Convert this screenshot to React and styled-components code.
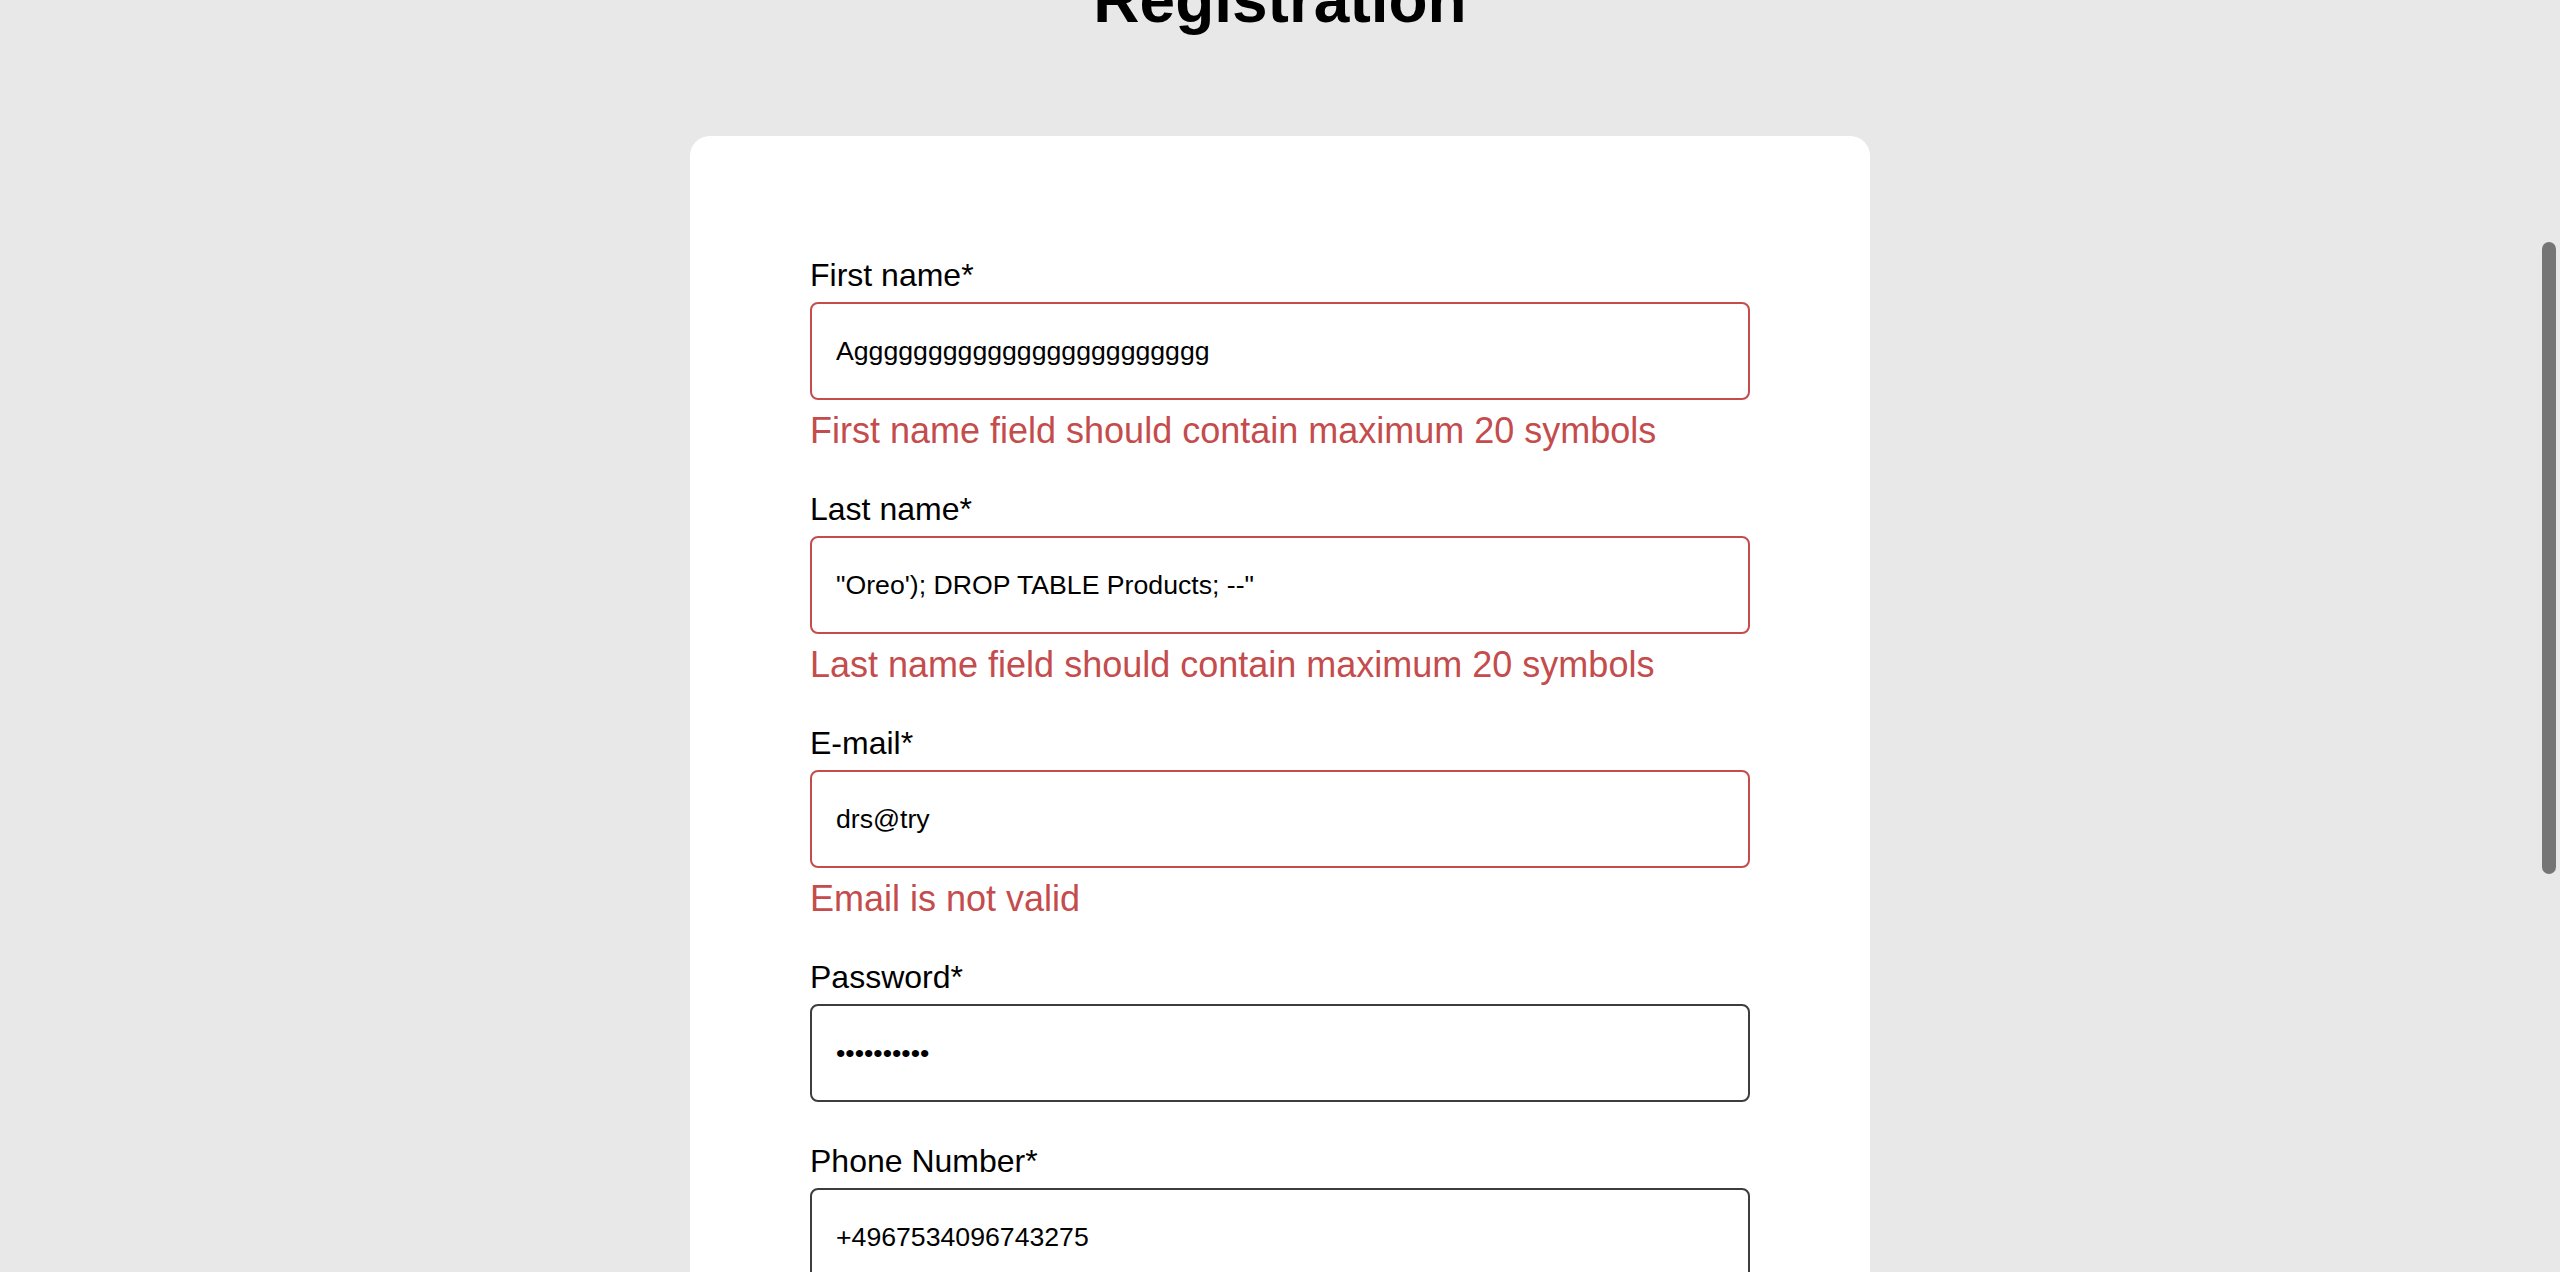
import styled, { createGlobalStyle } from "styled-components";

const GlobalStyle = createGlobalStyle`
  html, body {
    margin: 0;
    padding: 0;
    background: #e8e8e8;
    overflow: hidden;
  }
  body {
    font-family: "Liberation Sans", Arial, Helvetica, sans-serif;
    color: #000;
  }
`;

const Page = styled.main`
  display: flex;
  flex-direction: column;
  align-items: center;
  margin-top: -37px;
`;

const Title = styled.h1`
  margin: 0;
  font-size: 64px;
  font-weight: 700;
  line-height: normal;
`;

const Card = styled.section`
  box-sizing: border-box;
  width: 1180px;
  margin-top: 99px;
  padding: 121px 120px 120px;
  background: #fff;
  border-radius: 20px;
`;

const Form = styled.form`
  display: flex;
  flex-direction: column;
`;

const Field = styled.div`
  display: flex;
  flex-direction: column;
  margin-bottom: 41px;
`;

const Label = styled.label`
  font-size: 32px;
  line-height: normal;
  margin-bottom: 8px;
`;

const Input = styled.input`
  box-sizing: border-box;
  height: 98px;
  padding: 0 24px;
  border: 2px solid ${(p) => (p.$invalid ? "#c44c4c" : "#3d3d3d")};
  border-radius: 8px;
  background: #fff;
  color: #000;
  font-family: inherit;
  font-size: 26.67px;
  outline: none;
`;

const Error = styled.span`
  margin-top: 11px;
  color: #c44c4c;
  font-size: 36px;
  line-height: 39px;
`;

const ScrollThumb = styled.div`
  position: fixed;
  top: 242px;
  right: 4px;
  width: 14px;
  height: 632px;
  border-radius: 7px;
  background: #757575;
`;

const fields = [
  {
    id: "firstName",
    label: "First name*",
    value: "A" + "g".repeat(24),
    error: "First name field should contain maximum 20 symbols",
  },
  {
    id: "lastName",
    label: "Last name*",
    value: "\"Oreo'); DROP TABLE Products; --\"",
    error: "Last name field should contain maximum 20 symbols",
  },
  { id: "email", label: "E-mail*", value: "drs@try", error: "Email is not valid" },
  { id: "password", label: "Password*", value: "qwerty1234", type: "password" },
  { id: "phone", label: "Phone Number*", value: "+4967534096743275", type: "tel" },
];

export default function App() {
  return (
    <>
      <GlobalStyle />
      <Page>
        <Title>Registration</Title>
        <Card>
          <Form onSubmit={(e) => e.preventDefault()}>
            {fields.map((f) => (
              <Field key={f.id}>
                <Label htmlFor={f.id}>{f.label}</Label>
                <Input
                  id={f.id}
                  type={f.type || "text"}
                  value={f.value}
                  readOnly
                  $invalid={!!f.error}
                />
                {f.error && <Error>{f.error}</Error>}
              </Field>
            ))}
          </Form>
        </Card>
      </Page>
      <ScrollThumb />
    </>
  );
}
